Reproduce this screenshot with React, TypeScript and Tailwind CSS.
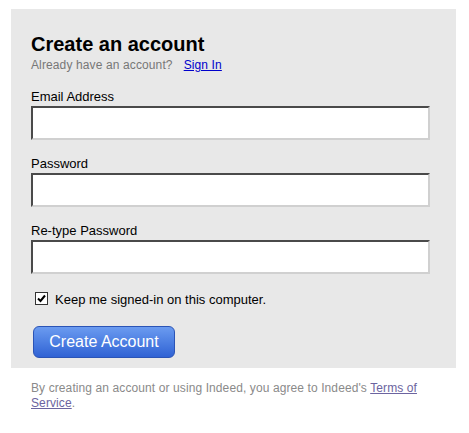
import React from "react";

function Field({ label, type }: { label: string; type: string }) {
  return (
    <div className="mt-[16px]">
      <label className="block text-[13px] leading-[15px] text-black mb-[2px]">{label}</label>
      <input
        type={type}
        className="block w-[399px] h-[34px] bg-white border-2 border-t-[#4a4a4a] border-l-[#4a4a4a] border-b-[#d0d0d0] border-r-[#d0d0d0] outline-none px-1 text-[13px]"
      />
    </div>
  );
}

export default function App() {
  return (
    <div className="min-h-[433px] bg-white pl-[11px] pt-[9px] font-['Liberation_Sans',Arial,sans-serif]">
      <div className="w-[445px] bg-[#e8e8e8] pl-[20px] pt-[23px] pb-[10px]">
        <h1 className="text-[20px] leading-[24px] font-bold text-black">Create an account</h1>
        <p className="mt-[2px] text-[12px] leading-[15px] text-[#777] tracking-[0.12px]">
          Already have an account?
          <a href="#" className="ml-[11px] text-[#0000cc] underline">
            Sign In
          </a>
        </p>
        <Field label="Email Address" type="email" />
        <Field label="Password" type="password" />
        <Field label="Re-type Password" type="password" />
        <div className="mt-[18px] flex items-start pl-[4px]">
          <span className="w-[13px] h-[13px] bg-white border border-[#333] flex items-center justify-center">
            <svg width="9" height="9" viewBox="0 0 9 9">
              <polyline points="1,4.5 3.5,7 8,1.5" fill="none" stroke="#000" strokeWidth="2" />
            </svg>
          </span>
          <span className="ml-[7px] text-[13px] leading-[15px] text-black">Keep me signed-in on this computer.</span>
        </div>
        <button
          type="button"
          className="mt-[19px] ml-[2px] block w-[142px] h-[32px] rounded-[6px] border border-[#2b54b6] bg-gradient-to-b from-[#6b9bf0] to-[#3062d4] text-white text-[16px] leading-[30px] text-center"
        >
          Create Account
        </button>
      </div>
      <p className="mt-[13px] ml-[20px] w-[399px] text-[12px] leading-[15px] text-[#8a8a8a] tracking-[0.1px]">
        By creating an account or using Indeed, you agree to Indeed's{" "}
        <a href="#" className="text-[#6c64a0] underline">
          Terms of Service
        </a>
        .
      </p>
    </div>
  );
}
